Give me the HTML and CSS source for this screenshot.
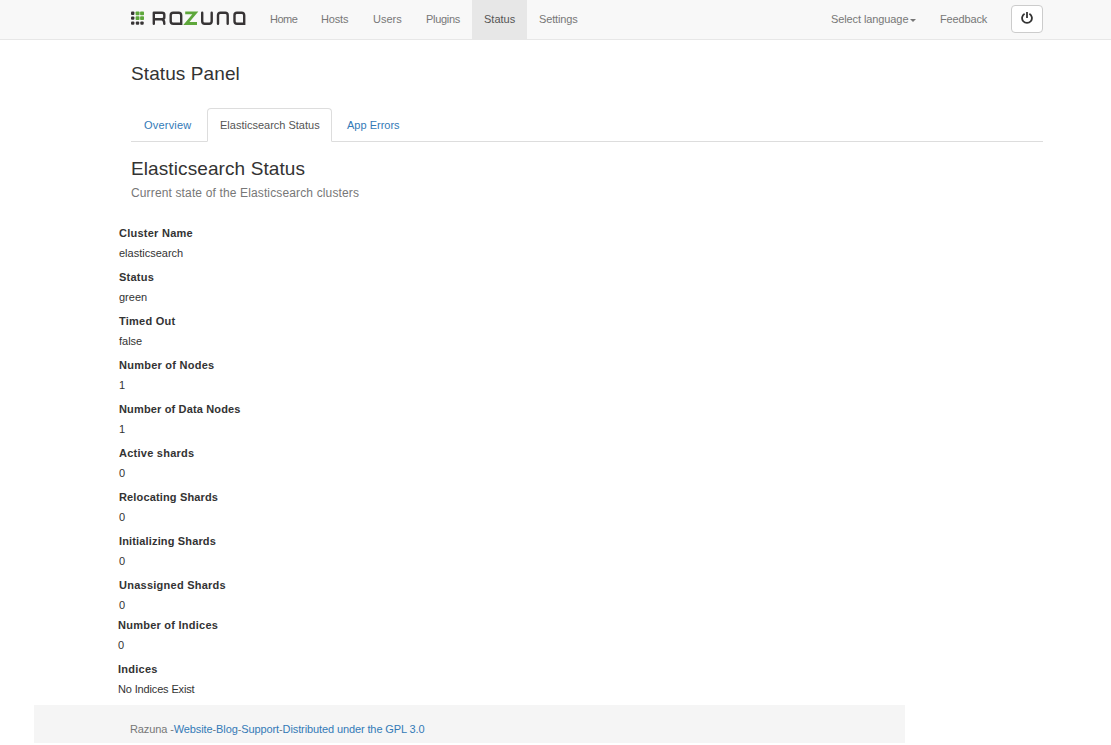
FILE: index.html
```html
<!DOCTYPE html>
<html lang="en">
<head>
<meta charset="utf-8">
<title>Razuna - Status Panel</title>
<link rel="stylesheet" href="styles.css">
</head>
<body>
<header class="navbar">
  <a class="brand" aria-label="Razuna">
    <svg width="115" height="16" viewBox="0 0 115 16" fill="none">
      <g fill="#373435"><rect x="0" y="1.6" width="3.4" height="3.4" rx="1"/><rect x="0" y="6.4" width="3.4" height="3.4" rx="1"/><rect x="0" y="11.4" width="3.4" height="3.4" rx="1"/><rect x="4.8" y="11.4" width="3.4" height="3.4" rx="1"/><rect x="9.3" y="11.4" width="3.4" height="3.4" rx="1"/></g>
      <g fill="#5ea73b"><rect x="4.6" y="1.4" width="3.9" height="3.9" rx=".8"/><rect x="9.1" y="1.4" width="3.9" height="3.9" rx=".8"/><rect x="4.6" y="6.2" width="3.9" height="3.9" rx=".8"/><rect x="9.1" y="6.2" width="3.9" height="3.9" rx=".8"/></g>
      <g stroke="#373435" stroke-width="2.4" stroke-linecap="round" stroke-linejoin="round">
        <path d="M22.8 13.8V2.7H31Q33.3 2.7 33.3 4.7V7.3Q33.3 9.3 31 9.3H23.5M30.5 9.3Q33.3 9.5 33.3 13.8"/>
        <path stroke-linecap="square" d="M50.2 13.8V5.2Q50.2 2.7 47.7 2.7H42.2Q39.7 2.7 39.7 5.2V11.3Q39.7 13.8 42.2 13.8H50.2"/>
        <path d="M71.2 2.7V11.3Q71.2 13.8 73.7 13.8H78.2Q80.7 13.8 80.7 11.3V2.7"/>
        <path d="M87 13.8V5.2Q87 2.7 89.5 2.7H94.2Q96.7 2.7 96.7 5.2V13.8"/>
        <path stroke-linecap="square" d="M113.2 13.8V5.2Q113.2 2.7 110.7 2.7H106Q103.5 2.7 103.5 5.2V11.3Q103.5 13.8 106 13.8H113.2"/>
      </g>
      <path d="M54.2 2.9H64.3L55.3 13.5H66" stroke="#5ea73b" stroke-width="2.8"/>
    </svg>
  </a>
  <nav class="menu">
    <a class="home">Home</a><a class="hosts">Hosts</a><a class="users">Users</a><a class="plugins">Plugins</a><a class="active">Status</a><a class="settings">Settings</a>
  </nav>
  <nav class="menu menu-right">
    <a class="language">Select language<span class="caret"></span></a><a class="feedback">Feedback</a>
  </nav>
  <button class="power" aria-label="Log out">
    <svg width="12" height="12" viewBox="0 0 12 12" fill="none" stroke="#333" stroke-width="1.8"><path d="M3.6 1.8A4.9 4.9 0 1 0 8.4 1.8M6 0V6"/></svg>
  </button>
</header>
<main class="container">
  <h1 class="page-title">Status Panel</h1>
  <div class="tabs">
    <a class="tab overview">Overview</a><a class="tab selected">Elasticsearch Status</a><a class="tab">App Errors</a>
  </div>
  <h2 class="section-title">Elasticsearch Status</h2>
  <p class="lead">Current state of the Elasticsearch clusters</p>
  <dl class="details">
    <dt>Cluster Name</dt><dd>elasticsearch</dd>
    <dt>Status</dt><dd>green</dd>
    <dt>Timed Out</dt><dd>false</dd>
    <dt>Number of Nodes</dt><dd>1</dd>
    <dt class="snug">Number of Data Nodes</dt><dd>1</dd>
    <dt>Active shards</dt><dd>0</dd>
    <dt class="snug">Relocating Shards</dt><dd>0</dd>
    <dt class="snug">Initializing Shards</dt><dd>0</dd>
    <dt>Unassigned Shards</dt><dd>0</dd>
  </dl>
  <dl class="details indices">
    <dt>Number of Indices</dt><dd>0</dd>
    <dt>Indices</dt><dd class="empty">No Indices Exist</dd>
  </dl>
</main>
<footer class="footer">Razuna -<a>Website</a>-<a>Blog</a>-<a>Support</a>-<a>Distributed under the GPL 3.0</a></footer>
</body>
</html>
```
FILE: styles.css
```css
* { box-sizing: border-box; }
body {
  margin: 0;
  height: 745px;
  overflow: hidden;
  background: #fff;
  color: #333;
  font: 11px/20px "Liberation Sans", Arial, sans-serif;
}
h1, h2, p, dl, dd { margin: 0; }
.navbar {
  display: flex;
  height: 40px;
  padding: 0 68px 0 131px;
  background: #f8f8f8;
  border-bottom: 1px solid #e7e7e7;
}
.brand { width: 127px; padding-top: 10px; }
.brand svg { display: block; }
.menu { display: flex; color: #777; }
.menu a { padding: 9px 0 10px 12px; white-space: nowrap; letter-spacing: -.15px; }
.menu .home { width: 51px; letter-spacing: -.5px; }
.menu .hosts { width: 52px; }
.menu .users { width: 53px; letter-spacing: 0; }
.menu .plugins { width: 58px; letter-spacing: -.3px; }
.menu .active { width: 55px; background: #e7e7e7; color: #555; letter-spacing: 0; }
.menu-right { margin-left: auto; }
.menu .language { width: 109px; letter-spacing: -.1px; }
.menu .feedback { width: 83px; }
.caret {
  display: inline-block;
  margin-left: 2px;
  vertical-align: 1px;
  border: 3px solid transparent;
  border-top-color: #777;
  border-bottom: 0;
}
.power {
  display: flex;
  align-items: center;
  justify-content: center;
  width: 32px;
  height: 28px;
  margin: 5px 0 0;
  padding: 0 0 2px;
  background: #fff;
  border: 1px solid #ccc;
  border-radius: 4px;
}
.container { width: 912px; margin-left: 131px; }
.page-title, .section-title {
  font-size: 19px;
  font-weight: 400;
  line-height: 22px;
  letter-spacing: .1px;
}
.page-title { padding-top: 23px; }
.tabs {
  display: flex;
  height: 34px;
  margin-top: 23px;
  border-bottom: 1px solid #ddd;
}
.tab {
  height: 34px;
  padding: 6px 12px 7px;
  border: 1px solid transparent;
  border-radius: 4px 4px 0 0;
  margin-right: 2px;
  color: #337ab7;
  white-space: nowrap;
}
.tab.overview { width: 74px; letter-spacing: .2px; }
.tab.selected {
  width: 125px;
  background: #fff;
  border-color: #ddd #ddd #fff;
  color: #555;
}
.section-title { margin-top: 16px; }
.lead { margin-top: 3px; color: #777; font-size: 12px; letter-spacing: .14px; }
.details { margin: 20px 0 0 -12px; }
.details dt { font-weight: 700; letter-spacing: .25px; }
.details dt.snug { letter-spacing: .15px; }
.details dd { margin-bottom: 4px; }
.details .empty { letter-spacing: -.15px; }
.indices { margin: -4px 0 0 -13px; }
.footer {
  width: 871px;
  height: 38px;
  margin: 6px 0 0 34px;
  padding: 14px 96px 4px;
  background: #f5f5f5;
  color: #777;
  letter-spacing: -.11px;
}
.footer a { color: #337ab7; }
```
